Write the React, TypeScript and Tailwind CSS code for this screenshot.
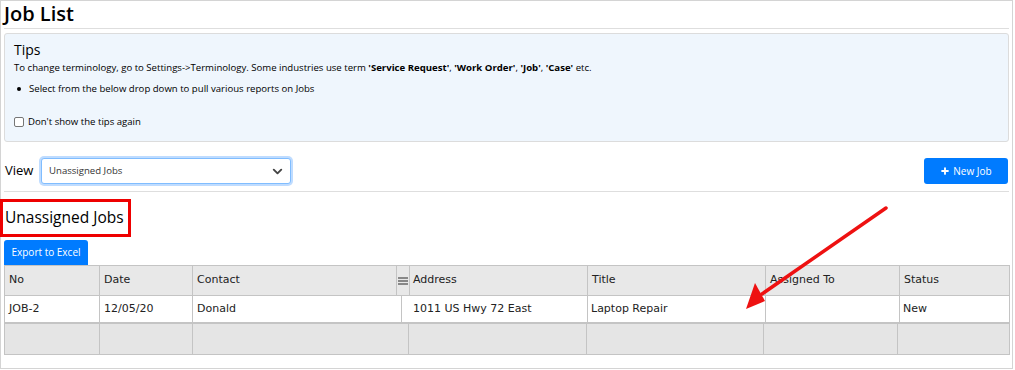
import { ChevronDown, Plus } from 'lucide-react';

const head = [
  { label: 'No', w: 'w-[94px]' },
  { label: 'Date', w: 'w-[93px]' },
  { label: 'Contact', w: 'w-[217px]' },
  { label: 'Address', w: 'w-[178px]' },
  { label: 'Title', w: 'w-[178px]' },
  { label: 'Assigned To', w: 'w-[134px]' },
  { label: 'Status', w: 'flex-1' },
];

// body row has its own column edges (grid is slightly offset from the header)
const body = [
  { v: 'JOB-2', w: 'w-[94px]', pl: 'pl-[4px]' },
  { v: '12/05/20', w: 'w-[93px]', pl: 'pl-[4px]' },
  { v: 'Donald', w: 'w-[209px]', pl: 'pl-[4px]' },
  { v: '1011 US Hwy 72 East', w: 'w-[186px]', pl: 'pl-[11px]' },
  { v: 'Laptop Repair', w: 'w-[178px]', pl: 'pl-[3px]' },
  { v: '', w: 'w-[134px]', pl: 'pl-[4px]' },
  { v: 'New', w: 'flex-1', pl: 'pl-[3px]' },
];

const foot = ['w-[94px]', 'w-[93px]', 'w-[216px]', 'w-[178px]', 'w-[177px]', 'w-[134px]', 'flex-1'];

export default function App() {
  return (
    <div className="relative h-[370px] w-[1015px] bg-white font-['Open_Sans',sans-serif] text-black">
      <div className="h-[369px] w-[1013px] border border-[#d4d4d4] px-[3px]">
        {/* title */}
        <div className="border-b border-[#dedede] pb-[2px]">
          <h1 className="pt-[1px] text-[20px] leading-[24px] font-semibold">Job List</h1>
        </div>

        {/* tips */}
        <div className="mt-[4px] h-[109px] rounded-[3px] border border-[#dcdcdc] bg-[#eff6fd] px-[9px] pt-[7px]">
          <div className="text-[14px] leading-[18px] font-medium">Tips</div>
          <p className="mt-[2px] text-[9.6px] leading-[14px]">
            To change terminology, go to Settings-&gt;Terminology. Some industries use term{' '}
            <b>'Service Request'</b>, <b>'Work Order'</b>, <b>'Job'</b>, <b>'Case'</b> etc.
          </p>
          <div className="mt-[7px] flex items-center text-[9.6px] leading-[14px]">
            <span className="ml-[3px] mr-[8px] h-[4px] w-[4px] rounded-full bg-black" />
            Select from the below drop down to pull various reports on Jobs
          </div>
          <label className="mt-[19px] flex items-center text-[9.6px] leading-[14px]">
            <span className="mr-[4px] h-[10px] w-[10px] rounded-[2px] border border-[#767676] bg-white" />
            Don't show the tips again
          </label>
        </div>

        {/* view row */}
        <div className="mt-[16px] flex items-center border-b border-[#dedede] pb-[7px]">
          <span className="ml-[1px] w-[36px] text-[13px]">View</span>
          <div className="flex h-[26px] w-[250px] items-center justify-between rounded-[3px] border border-[#80bdff] bg-white pl-[7px] pr-[5px] shadow-[0_0_0_2px_#bfdcff]">
            <span className="text-[9.6px] text-[#333]">Unassigned Jobs</span>
            <ChevronDown size={15} strokeWidth={3} className="text-[#444]" />
          </div>
          <button className="ml-auto mr-[1px] flex h-[26px] w-[84px] items-center justify-center gap-[3px] rounded-[3px] bg-[#007bff] text-[10px] text-white">
            <Plus size={10} strokeWidth={4.5} />
            New Job
          </button>
        </div>

        {/* heading */}
        <div className="-ml-[4px] mt-[7px] inline-block h-[38px] border-[3px] border-[#ee0000] pl-[2px] pr-[4px]">
          <h2 className="pt-[5px] text-[15.5px] leading-[20px]">Unassigned Jobs</h2>
        </div>

        <div className="mt-[1px]">
          <button className="h-[25px] w-[84px] rounded-t-[3px] bg-[#007bff] text-[10px] text-white">Export to Excel</button>
        </div>

        {/* table */}
        <div className="w-[1006px] border border-t-0 border-[#c4c4c4] font-['DejaVu_Sans',Verdana,sans-serif] text-[11px] text-[#222]">
          <div className="flex h-[31px] border-y border-[#c4c4c4] bg-[#e8e8e8]">
            {head.map((c, i) => (
              <div
                key={c.label}
                className={`${c.w} flex items-center ${i > 0 ? 'border-l border-[#c4c4c4]' : ''} ${i === 3 ? 'pl-[3px]' : 'pl-[4px]'}`}
              >
                {c.label === 'Contact' ? (
                  <div className="flex h-full flex-1 items-center justify-between">
                    <span>Contact</span>
                    <div className="flex h-full items-center border-l border-[#c4c4c4] px-[1px]">
                      <div className="flex w-[10px] flex-col gap-[1px]">
                        <span className="h-[2px] bg-[#888]" />
                        <span className="h-[2px] bg-[#888]" />
                        <span className="h-[2px] bg-[#888]" />
                      </div>
                    </div>
                  </div>
                ) : (
                  c.label
                )}
              </div>
            ))}
          </div>
          <div className="flex h-[28px] border-b-2 border-[#c4c4c4] bg-white">
            {body.map((c, i) => (
              <div key={i} className={`${c.w} ${c.pl} flex items-center ${i > 0 ? 'border-l border-[#c4c4c4]' : ''}`}>
                {c.v}
              </div>
            ))}
          </div>
          <div className="flex h-[30px] bg-[#e5e5e5]">
            {foot.map((w, i) => (
              <div key={i} className={`${w} ${i > 0 ? 'border-l border-[#c4c4c4]' : ''}`} />
            ))}
          </div>
        </div>
      </div>

      {/* annotation arrow */}
      <svg className="pointer-events-none absolute left-0 top-0" width="1015" height="370">
        <line x1="886" y1="208" x2="762" y2="294" stroke="#ee1111" strokeWidth="3.5" strokeLinecap="round" />
        <polygon points="746,309 755,283 765,301" fill="#ee1111" />
      </svg>
    </div>
  );
}
